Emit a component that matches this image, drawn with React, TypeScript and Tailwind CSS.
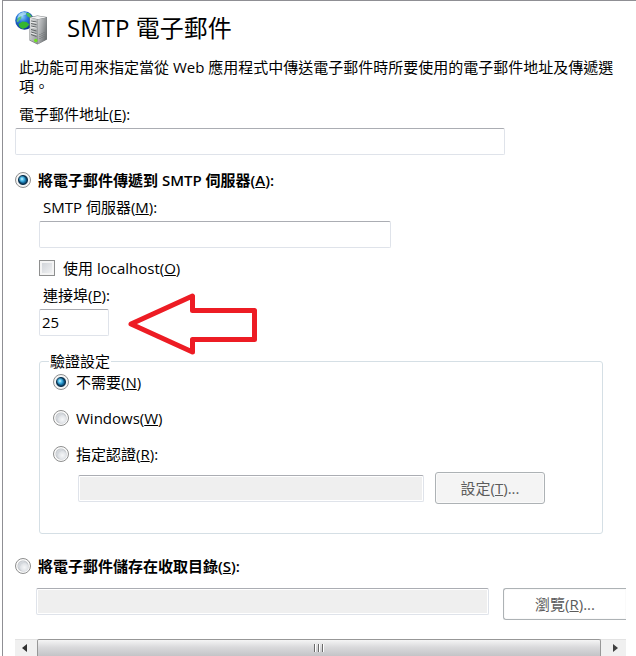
import { useState } from "react";
import type { ReactNode } from "react";

const radioStyle =
  "h-4 w-4 shrink-0 appearance-none rounded-full border border-[#8e8f8f] bg-[radial-gradient(circle_at_60%_60%,#f6f7f8_0,#dfe2e6_4px,transparent_4.5px),radial-gradient(circle_at_center,#d3d7dc_0,#d3d7dc_4.5px,#c3c6ca_5px,#fafafa_6px)] checked:bg-[radial-gradient(circle_at_6px_6px,#d8f6ff_0,#5cc4ee_1.5px,transparent_3.5px),radial-gradient(circle_at_center,#2a9fd6_0,#1878ae_2.5px,#0c3350_4px,#0c3350_4.5px,#f4f4f4_5.5px)]";

const textBoxStyle =
  "h-[27px] rounded-xs border border-[#dfe3ea] border-t-[#abadb3] bg-white px-0.5 pb-0.5 outline-none disabled:bg-[#efefef] disabled:shadow-[inset_0_0_0_1px_#fff]";

const buttonStyle =
  "h-8 shrink-0 border border-[#adb2b5] text-[#5c5c5c] shadow-[inset_0_0_0_1px_#fafafa]";

type RadioProps = {
  id: string;
  name: string;
  value: string;
  selected: string;
  onSelect: (value: string) => void;
  className?: string;
  children: ReactNode;
};

const RadioRow = ({
  id,
  name,
  value,
  selected,
  onSelect,
  className = "",
  children,
}: RadioProps) => {
  return (
    <div className={`flex h-5 items-center gap-[7px] ${className}`}>
      <input
        type="radio"
        id={id}
        name={name}
        checked={selected === value}
        onChange={() => onSelect(value)}
        className={radioStyle}
      />
      <label id={`${id}-label`} htmlFor={id}>
        {children}
      </label>
    </div>
  );
};

const ServerIcon = () => (
  <svg width="34" height="34" viewBox="0 0 34 34" className="shrink-0">
    <defs>
      <radialGradient id="globe" cx="0.38" cy="0.3" r="0.75">
        <stop offset="0" stopColor="#8fcdfb" />
        <stop offset="0.4" stopColor="#2474d8" />
        <stop offset="1" stopColor="#0a2a8c" />
      </radialGradient>
      <linearGradient id="front" x1="0" y1="0" x2="1" y2="1">
        <stop offset="0" stopColor="#e4e6e7" />
        <stop offset="1" stopColor="#8e9294" />
      </linearGradient>
      <linearGradient id="side" x1="0" y1="0" x2="1" y2="0.6">
        <stop offset="0" stopColor="#cfd1d3" />
        <stop offset="0.5" stopColor="#a3a6a8" />
        <stop offset="1" stopColor="#6e7274" />
      </linearGradient>
    </defs>
    <circle cx="9.5" cy="9.5" r="9.3" fill="url(#globe)" />
    <path d="M4 3 8 1l4 0.500-1 2-3 1-2 2-4 1Z" fill="#bfe9f5" opacity="0.7" />
    <path d="M1.500 10l2-3.500 3-1.500-0.500 3-2 1.500-1 2Z" fill="#5cc47a" />
    <path d="M3.500 13l4-2.500 4 0.500 3 2.500-3 3-4 1.500-3-2Z" fill="#35b52f" />
    <path d="M11 2l3 0 3 3.500-2 1.500-3-2Z" fill="#48bf56" />
    <path d="M14.500 6 22.500 4.500 32 6v22.500L22.500 33.500 14.500 29.500Z" fill="#777b7d" />
    <path d="M15 6.400 22.500 5l9 1.300-8.500 2Z" fill="#f1f2f3" />
    <path d="M15 6.800 22.800 8.500V33L15 29Z" fill="url(#front)" />
    <path d="M23 8.500 31.700 6.500v21.700L23 33Z" fill="url(#side)" />
    <path
      d="M16 10l5.500 1M16 12.500l5.500 1.100M16 15l5.500 1.200M16 18.500l5.500 1.500M16 21l5.500 1.700M16 23.500l5.500 2"
      stroke="#606466"
      strokeWidth="1"
    />
    <path
      d="M16 11l5.500 1M16 16l5.500 1.200M16 22l5.500 1.700"
      stroke="#fafafa"
      strokeWidth="0.7"
    />
    <path d="M27 22v6M29 21v6M25 23v6" stroke="#737779" strokeDasharray="1 1" />
    <circle cx="20.800" cy="29.500" r="1.700" fill="#6fe01e" />
  </svg>
);

const ScrollBar = () => (
  <div className="mt-[19px] flex h-[17px] bg-[#f0f0f0]">
    <button
      type="button"
      aria-label="Left"
      className="flex w-[22px] items-center justify-center border-t border-[#e3e3e3] pr-1"
    >
      <svg width="5" height="8" viewBox="0 0 5 8">
        <path d="M5 0v8L0 4Z" fill="#303030" />
      </svg>
    </button>
    <div className="flex flex-1 items-center justify-center gap-0.5 rounded-t-xs border border-b-0 border-[#979797] bg-linear-to-b from-[#f5f5f5] from-0% via-[#dadadc] via-45% to-[#c4c4c7]">
      <span className="h-2 w-0.5 border-l border-[#6b6b6b] bg-white" />
      <span className="h-2 w-0.5 border-l border-[#6b6b6b] bg-white" />
      <span className="h-2 w-0.5 border-l border-[#6b6b6b] bg-white" />
    </div>
    <button
      type="button"
      aria-label="Right"
      className="flex w-[25px] items-center justify-center border-t border-[#e3e3e3] pl-1"
    >
      <svg width="5" height="8" viewBox="0 0 5 8">
        <path d="M0 0v8l5-4Z" fill="#404040" />
      </svg>
    </button>
  </div>
);

const App = () => {
  const [delivery, setDelivery] = useState("server");
  const [auth, setAuth] = useState("none");

  return (
    <div className="bg-white pl-0.5">
      <main className="border-t border-l border-[#8f8f94] pr-2.5 pl-3 font-['Open_Sans','Noto_Sans_CJK_TC',sans-serif] text-[15px] leading-5 text-black">
        <header className="flex h-[54px] items-center gap-[18px]">
          <ServerIcon />
          <h1 className="text-2xl">SMTP 電子郵件</h1>
        </header>
        <p className="mt-[3px] pl-1 leading-[19px]">
          此功能可用來指定當從 Web 應用程式中傳送電子郵件時所要使用的電子郵件地址及傳遞選項。
        </p>

        <div className="mt-2 flex flex-col gap-1">
          <label htmlFor="email" className="pl-1">
            電子郵件地址(<u>E</u>):
          </label>
          <input id="email" type="text" className={`${textBoxStyle} w-[490px] max-w-full`} />
        </div>

        <RadioRow
          id="server"
          name="delivery"
          value="server"
          selected={delivery}
          onSelect={setDelivery}
          className="mt-[15px] font-semibold"
        >
          將電子郵件傳遞到 SMTP 伺服器(<u>A</u>):
        </RadioRow>
        <div className="mt-[7px] pl-6">
          <div className="flex flex-col gap-1">
            <label htmlFor="smtp" className="pl-1">
              SMTP 伺服器(<u>M</u>):
            </label>
            <input id="smtp" type="text" className={`${textBoxStyle} w-[352px] max-w-full`} />
          </div>
          <div className="mt-2.5 flex h-5 items-center gap-2">
            <input
              id="localhost"
              type="checkbox"
              className="h-4 w-4 appearance-none border border-[#8e8f8f] bg-linear-to-br from-[#cbcfd5] to-[#f6f6f6] shadow-[inset_0_0_0_2px_#f4f4f4] checked:from-[#2a5d8c]"
            />
            <label htmlFor="localhost">
              使用 localhost(<u>O</u>)
            </label>
          </div>
          <div className="relative mt-[7px] flex flex-col gap-1">
            <label htmlFor="port" className="pl-1">
              連接埠(<u>P</u>):
            </label>
            <input
              id="port"
              type="text"
              defaultValue="25"
              className={`${textBoxStyle} w-[70px]`}
            />
            <svg
              width="130"
              height="64"
              viewBox="0 0 130 64"
              className="absolute top-2 left-[89px]"
            >
              <path
                d="M3 31 64.500 3v14.500h62v29h-62V59Z"
                fill="none"
                stroke="#ed1c24"
                strokeWidth="5"
                strokeLinejoin="round"
              />
            </svg>
          </div>

          <fieldset className="mt-[15px] mr-[23px] rounded-[3px] border border-[#d5dfe5] pr-[57px] pb-[29px] pl-[13px]">
            <legend className="-ml-1 px-px">驗證設定</legend>
            <div className="flex flex-col gap-4 pt-px">
              <RadioRow id="none" name="auth" value="none" selected={auth} onSelect={setAuth}>
                不需要(<u>N</u>)
              </RadioRow>
              <RadioRow id="windows" name="auth" value="windows" selected={auth} onSelect={setAuth}>
                Windows(<u>W</u>)
              </RadioRow>
              <RadioRow id="custom" name="auth" value="custom" selected={auth} onSelect={setAuth}>
                指定認證(<u>R</u>):
              </RadioRow>
            </div>
            <div className="mt-2 flex items-center gap-[11px] pl-[25px]">
              <input
                type="text"
                disabled
                aria-labelledby="custom-label"
                className={`${textBoxStyle} min-w-0 flex-1`}
              />
              <button
                type="button"
                disabled
                className={`${buttonStyle} w-[110px] rounded-[3px] bg-[#f4f4f4]`}
              >
                設定(<u>T</u>)...
              </button>
            </div>
          </fieldset>
        </div>

        <RadioRow
          id="pickup"
          name="delivery"
          value="pickup"
          selected={delivery}
          onSelect={setDelivery}
          className="mt-[22px] font-semibold"
        >
          將電子郵件儲存在收取目錄(<u>S</u>):
        </RadioRow>
        <div className="mt-3 flex items-start gap-3.5 pl-[21px]">
          <input
            type="text"
            disabled
            aria-labelledby="pickup-label"
            className={`${textBoxStyle} min-w-0 flex-1`}
          />
          <button
            type="button"
            disabled
            className={`${buttonStyle} w-[123px] rounded-l-[3px] border-r-0 bg-white`}
          >
            瀏覽(<u>R</u>)...
          </button>
        </div>
        <ScrollBar />
      </main>
    </div>
  );
};

export default App;
